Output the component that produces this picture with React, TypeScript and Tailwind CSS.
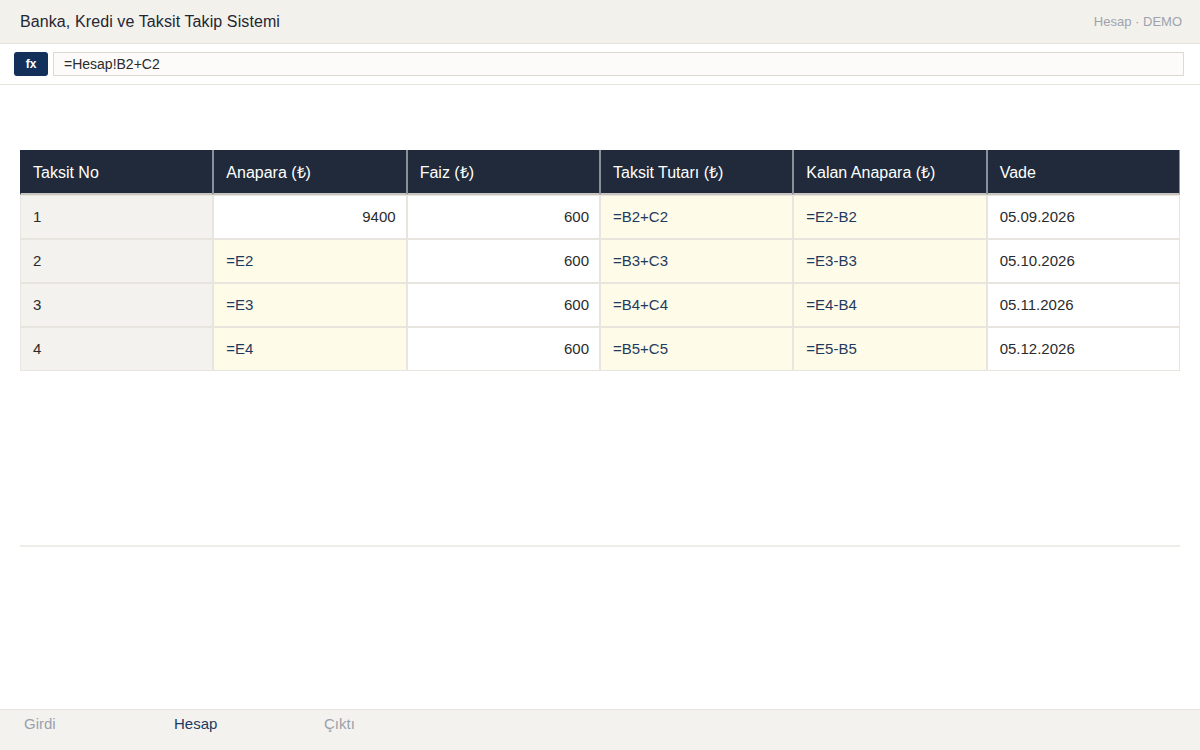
import React from "react";

const headers = [
  "Taksit No",
  "Anapara (₺)",
  "Faiz (₺)",
  "Taksit Tutarı (₺)",
  "Kalan Anapara (₺)",
  "Vade",
];

type Cell = { v: string; kind: "no" | "num" | "formula" | "text" };

const rows: Cell[][] = [
  [
    { v: "1", kind: "no" },
    { v: "9400", kind: "num" },
    { v: "600", kind: "num" },
    { v: "=B2+C2", kind: "formula" },
    { v: "=E2-B2", kind: "formula" },
    { v: "05.09.2026", kind: "text" },
  ],
  [
    { v: "2", kind: "no" },
    { v: "=E2", kind: "formula" },
    { v: "600", kind: "num" },
    { v: "=B3+C3", kind: "formula" },
    { v: "=E3-B3", kind: "formula" },
    { v: "05.10.2026", kind: "text" },
  ],
  [
    { v: "3", kind: "no" },
    { v: "=E3", kind: "formula" },
    { v: "600", kind: "num" },
    { v: "=B4+C4", kind: "formula" },
    { v: "=E4-B4", kind: "formula" },
    { v: "05.11.2026", kind: "text" },
  ],
  [
    { v: "4", kind: "no" },
    { v: "=E4", kind: "formula" },
    { v: "600", kind: "num" },
    { v: "=B5+C5", kind: "formula" },
    { v: "=E5-B5", kind: "formula" },
    { v: "05.12.2026", kind: "text" },
  ],
];

const cellClass: Record<Cell["kind"], string> = {
  no: "bg-[#f3f2ee] text-[#2b2b2b] pl-3",
  num: "bg-white text-[#2b2b2b] justify-end pr-[10px]",
  formula: "bg-[#fefbe8] text-[#1e3a5f] pl-3",
  text: "bg-white text-[#2b2b2b] pl-3",
};

export default function App() {
  return (
    <div className="h-[750px] w-full flex flex-col bg-white font-['Liberation_Sans',Arial,sans-serif]">
      <header className="h-[44px] shrink-0 flex items-center justify-between px-5 bg-[#f3f1ec] border-b border-[#e6e3dc]">
        <h1 className="text-[16px] text-[#1f2733] tracking-[0.1px]">Banka, Kredi ve Taksit Takip Sistemi</h1>
        <span className="text-[13px] text-[#9ca3af] mr-[-2px]">Hesap · DEMO</span>
      </header>

      <div className="h-[41px] shrink-0 flex items-center gap-[5px] pl-[14px] pr-[16px] border-b border-[#e6e3dc]">
        <span className="w-[34px] h-[24px] rounded-[3px] bg-[#13305a] text-white text-[12px] font-bold flex items-center justify-center">
          fx
        </span>
        <div className="flex-1 h-[24px] flex items-center px-[10px] bg-[#fcfbf9] border border-[#dedad2] text-[14px] text-[#2b2b2b]">
          =Hesap!B2+C2
        </div>
      </div>

      <main className="flex-1 px-5 pt-[65px]">
        <div className="grid grid-cols-6">
          {headers.map((h) => (
            <div
              key={h}
              className="h-[45px] flex items-center px-3 pt-[2px] bg-[#202a3a] text-white text-[16px] border-r border-l border-b-2 border-l-[#8a909a] border-r-[#8a909a] border-b-[#c9c6c0] first:border-l-[#202a3a] last:border-r-[#202a3a]"
            >
              {h}
            </div>
          ))}
          {rows.map((r, i) =>
            r.map((c, j) => (
              <div
                key={`${i}-${j}`}
                className={`h-[44px] flex items-center text-[15px] border border-[#e8e5df] ${cellClass[c.kind]}`}
              >
                {c.v}
              </div>
            ))
          )}
        </div>
        <div className="mt-[174px] h-[2px] bg-[#efede9]" />
      </main>

      <nav className="h-[41px] shrink-0 flex bg-[#f3f2ee] border-t border-[#e6e3dc] text-[15px]">
        <span className="w-[150px] pl-6 pt-[3px] text-[#9aa1ac]">Girdi</span>
        <span className="w-[150px] pl-6 pt-[3px] text-[#1e3a5f]">Hesap</span>
        <span className="w-[150px] pl-6 pt-[3px] text-[#9aa1ac]">Çıktı</span>
      </nav>
    </div>
  );
}
